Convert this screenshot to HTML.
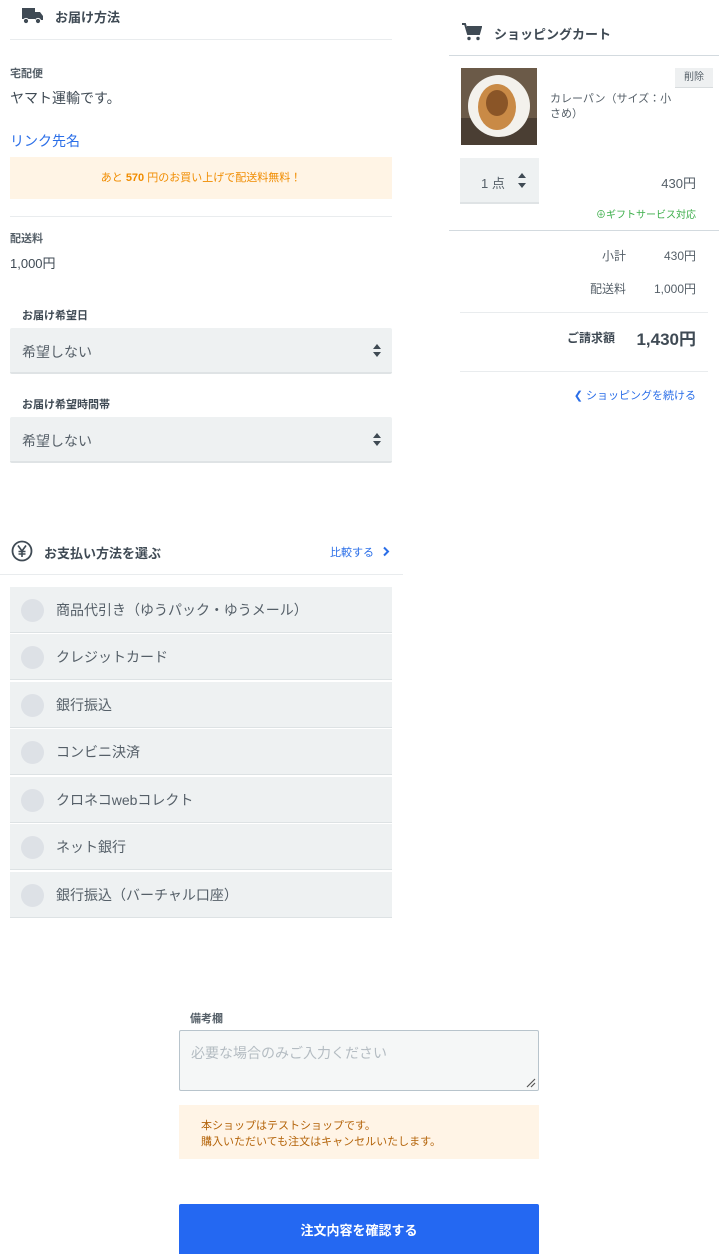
<!DOCTYPE html>
<html><head><meta charset="utf-8"><style>
*{margin:0;padding:0;box-sizing:border-box}
body{width:726px;height:1254px;position:relative;background:#fff;font-family:"Liberation Sans","Noto Sans CJK JP",sans-serif;color:#3f4a54;overflow:hidden}
.a{position:absolute;white-space:nowrap}
.b{font-weight:bold}
.ln{position:absolute;height:1px;background:#e9ecee}
.sel{position:absolute;left:10px;width:382px;height:46px;background:#eef1f2;border-bottom:2px solid #dfe3e5;border-radius:2px}
.sel span{position:absolute;left:12px;top:14px;font-size:14px;color:#555f68}
.arr{position:absolute;width:0;height:0;border-left:4px solid transparent;border-right:4px solid transparent}
.opt{position:absolute;left:10px;width:382px;height:46px;background:#eef1f2;border-bottom:1px solid #dde2e4}
.opt i{position:absolute;left:11px;top:12px;width:23px;height:23px;border-radius:50%;background:#dde1e6}
.opt span{position:absolute;left:46px;top:13px;font-size:14px;color:#555f68}
</style></head><body>
<!-- truck -->
<svg class="a" style="left:22px;top:7px" width="22" height="18" viewBox="0 0 22 18"><rect x="0" y="1" width="13" height="11" fill="#3f4a54"/><path d="M13 5h5l3 4v4h-8z" fill="#3f4a54"/><circle cx="4" cy="14" r="2.6" fill="#3f4a54" stroke="#fff" stroke-width="1"/><circle cx="16" cy="14" r="2.6" fill="#3f4a54" stroke="#fff" stroke-width="1"/></svg>
<div class="a b" style="left:55px;top:7px;font-size:13px">お届け方法</div>
<div class="ln" style="left:10px;top:39px;width:382px"></div>
<div class="a b" style="left:10px;top:65px;font-size:11px;color:#555f68">宅配便</div>
<div class="a" style="left:10px;top:88px;font-size:14px">ヤマト運輸です。</div>
<div class="a" style="left:10px;top:131px;font-size:14px;color:#2a6ee8">リンク先名</div>
<div class="a" style="left:10px;top:157px;width:382px;height:42px;background:#fff4e5;text-align:center;font-size:11px;line-height:42px;color:#f08c00">あと <b>570</b> 円のお買い上げで配送料無料！</div>
<div class="ln" style="left:10px;top:216px;width:382px"></div>
<div class="a b" style="left:10px;top:230px;font-size:11px;color:#555f68">配送料</div>
<div class="a" style="left:10px;top:253px;font-size:13px">1,000円</div>
<div class="a b" style="left:22px;top:307px;font-size:11px">お届け希望日</div>
<div class="sel" style="top:328px"><span>希望しない</span><div class="arr" style="left:363px;top:16px;border-bottom:5px solid #3f4a54"></div><div class="arr" style="left:363px;top:24px;border-top:5px solid #3f4a54"></div></div>
<div class="a b" style="left:22px;top:396px;font-size:11px">お届け希望時間帯</div>
<div class="sel" style="top:417px"><span>希望しない</span><div class="arr" style="left:363px;top:16px;border-bottom:5px solid #3f4a54"></div><div class="arr" style="left:363px;top:24px;border-top:5px solid #3f4a54"></div></div>

<!-- payment -->
<svg class="a" style="left:11px;top:540px" width="22" height="22" viewBox="0 0 22 22"><circle cx="11" cy="11" r="9.5" fill="none" stroke="#3f4a54" stroke-width="1.8"/><path d="M7 5.5l4 5.5 4-5.5M11 11v6M7.5 11.5h7M7.5 14h7" fill="none" stroke="#3f4a54" stroke-width="1.6"/></svg>
<div class="a b" style="left:44px;top:543px;font-size:13px">お支払い方法を選ぶ</div>
<div class="a" style="left:330px;top:544px;font-size:11px;color:#2a6ee8">比較する</div>
<svg class="a" style="left:382px;top:546px" width="8" height="11" viewBox="0 0 8 11"><path d="M2 1.5l4 4-4 4" fill="none" stroke="#2a6ee8" stroke-width="2"/></svg>
<div class="ln" style="left:0;top:574px;width:403px"></div>
<div class="opt" style="top:587px"><i></i><span>商品代引き（ゆうパック・ゆうメール）</span></div>
<div class="opt" style="top:634px"><i></i><span>クレジットカード</span></div>
<div class="opt" style="top:682px"><i></i><span>銀行振込</span></div>
<div class="opt" style="top:729px"><i></i><span>コンビニ決済</span></div>
<div class="opt" style="top:777px"><i></i><span>クロネコwebコレクト</span></div>
<div class="opt" style="top:824px"><i></i><span>ネット銀行</span></div>
<div class="opt" style="top:872px"><i></i><span>銀行振込（バーチャル口座）</span></div>

<!-- cart -->
<svg class="a" style="left:462px;top:23px" width="20" height="18" viewBox="0 0 20 18"><path d="M0 1h3l3 10h11l2-7H5" fill="none" stroke="#3f4a54" stroke-width="2"/><path d="M5 4h14l-2 7H6z" fill="#3f4a54"/><circle cx="7" cy="15.5" r="1.7" fill="#3f4a54"/><circle cx="16" cy="15.5" r="1.7" fill="#3f4a54"/></svg>
<div class="a b" style="left:494px;top:24px;font-size:13px">ショッピングカート</div>
<div class="ln" style="left:449px;top:55px;width:270px;background:#d3dadf"></div>
<svg class="a" style="left:461px;top:68px" width="76" height="77" viewBox="0 0 76 77"><rect width="76" height="77" fill="#6b5a48"/><rect y="50" width="76" height="27" fill="#4a3e33"/><circle cx="38" cy="38" r="31" fill="#f3f1ec"/><ellipse cx="36" cy="39" rx="19" ry="23" fill="#c98a46"/><ellipse cx="36" cy="35" rx="11" ry="13" fill="#8a5527"/></svg>
<div class="a" style="left:675px;top:68px;width:38px;height:20px;background:#eef0f1;border-bottom:1px solid #d8dcde;font-size:10px;text-align:center;line-height:19px;color:#555f68">削除</div>
<div class="a" style="left:550px;top:92px;font-size:11px;line-height:15px;color:#555f68;white-space:normal;width:125px">カレーパン（サイズ：小さめ）</div>
<div class="a" style="left:460px;top:158px;width:79px;height:46px;background:#eef1f2;border-bottom:2px solid #dfe3e5"></div>
<div class="a" style="left:481px;top:173px;font-size:13px;color:#555f68">1 点</div>
<div class="arr" style="left:518px;top:173px;border-bottom:5px solid #3f4a54"></div>
<div class="arr" style="left:518px;top:183px;border-top:5px solid #3f4a54"></div>
<div class="a" style="right:30px;top:173px;font-size:13px;color:#555f68">430円</div>
<div class="a" style="right:30px;top:206px;font-size:10px;color:#3cae4a">⊕ギフトサービス対応</div>
<div class="ln" style="left:449px;top:230px;width:270px;background:#d3dadf"></div>
<div class="a" style="right:100px;top:247px;font-size:12px;color:#555f68">小計</div>
<div class="a" style="right:30px;top:247px;font-size:12px;color:#555f68">430円</div>
<div class="a" style="right:100px;top:280px;font-size:12px;color:#555f68">配送料</div>
<div class="a" style="right:30px;top:280px;font-size:12px;color:#555f68">1,000円</div>
<div class="ln" style="left:460px;top:312px;width:248px"></div>
<div class="a b" style="right:111px;top:329px;font-size:12px">ご請求額</div>
<div class="a b" style="right:30px;top:325px;font-size:17px">1,430円</div>
<div class="ln" style="left:460px;top:371px;width:248px"></div>
<div class="a" style="right:30px;top:387px;font-size:11px;color:#2a6ee8">❮ ショッピングを続ける</div>

<!-- bottom -->
<div class="a b" style="left:190px;top:1010px;font-size:11px;color:#555f68">備考欄</div>
<div class="a" style="left:179px;top:1030px;width:360px;height:61px;background:#f5f7f7;border:1px solid #b8c4cc;border-radius:2px"></div>
<div class="a" style="left:191px;top:1043px;font-size:14px;color:#b4bcc2">必要な場合のみご入力ください</div>
<svg class="a" style="left:525px;top:1077px" width="12" height="12" viewBox="0 0 12 12"><path d="M2 10L10 2M6 10l4-4" stroke="#555" stroke-width="1.2"/></svg>
<div class="a" style="left:179px;top:1105px;width:360px;height:54px;background:#fff4e6"></div>
<div class="a" style="left:201px;top:1118px;font-size:11px;line-height:16px;color:#b4640a">本ショップはテストショップです。<br>購入いただいても注文はキャンセルいたします。</div>
<div class="a b" style="left:179px;top:1204px;width:360px;height:50px;background:#2468f2;border-radius:2px 2px 0 0;color:#fff;font-size:13px;text-align:center;line-height:54px">注文内容を確認する</div>
</body></html>
